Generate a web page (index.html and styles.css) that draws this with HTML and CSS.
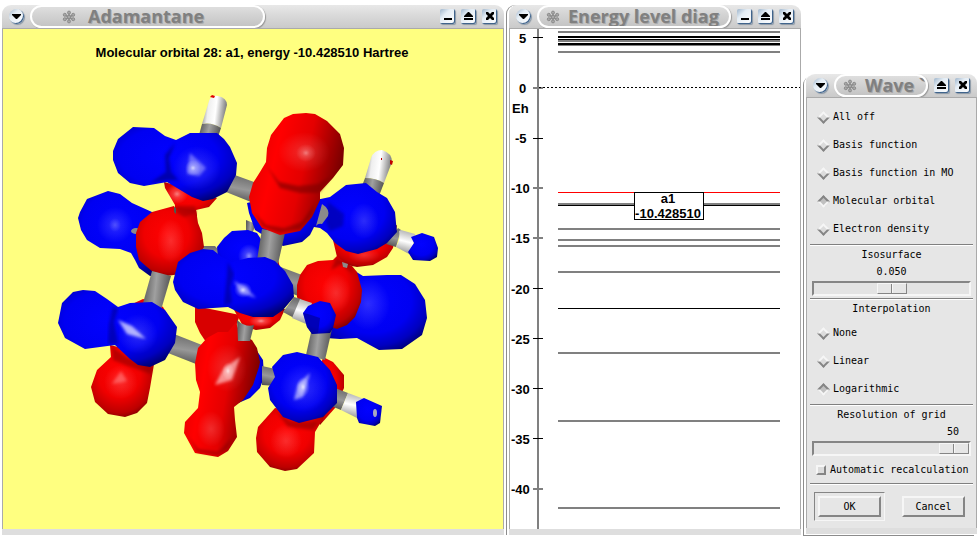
FILE: index.html
```html
<!DOCTYPE html>
<html lang="en">
<head>
<meta charset="utf-8">
<title>Adamantane</title>
<link rel="stylesheet" href="styles.css">
</head>
<body>
<svg class="defs" aria-hidden="true">
  <defs>
    <symbol id="flake" viewBox="0 0 14 14">
      <path stroke="#8c8c8c" stroke-width="1.500" d="M7 2v10M3 5l8 4.500M3 9.500l8-4.500"/>
      <g fill="#a8a8a8" stroke="#8c8c8c" stroke-width="1">
        <circle cx="7" cy="2.600" r="1.500"/><circle cx="7" cy="11.400" r="1.500"/>
        <circle cx="2.800" cy="4.800" r="1.500"/><circle cx="11.200" cy="4.800" r="1.500"/>
        <circle cx="2.800" cy="9.200" r="1.500"/><circle cx="11.200" cy="9.200" r="1.500"/>
        <circle cx="7" cy="7" r="1.800"/>
      </g>
    </symbol>
    <symbol id="down" viewBox="0 0 15 15"><path d="M3 5h9v1l-4 4h-1l-4-4z"/></symbol>
    <symbol id="min" viewBox="0 0 15 15"><path d="M4 9h8v2h-8z"/></symbol>
    <symbol id="eject" viewBox="0 0 15 15"><path d="M7 3h1l4 4v1h-9v-1zM3 9h9v2h-9z"/></symbol>
    <symbol id="close" viewBox="0 0 15 15"><path d="M4 3h2l2 2 2-2h2v2l-2 2 2 2v2h-2l-2-2-2 2h-2v-2l2-2-2-2z"/></symbol>
  </defs>
</svg>
<main class="desktop">
  <section class="window" aria-label="Adamantane">
    <header class="titlebar">
      <button class="tool round" aria-label="Menu"><svg><use href="#down"/></svg></button>
      <h1 class="pill wide"><svg class="flake"><use href="#flake"/></svg><span>Adamantane</span></h1>
      <button class="tool" aria-label="Minimize"><svg><use href="#min"/></svg></button>
      <button class="tool" aria-label="Maximize"><svg><use href="#eject"/></svg></button>
      <button class="tool" aria-label="Close"><svg><use href="#close"/></svg></button>
    </header>
    <div class="view yellow">
      <svg class="canvas" viewBox="3 29 500 500" role="img" aria-label="Molecular orbital 28">
        <defs>
          <radialGradient id="blue" cx=".45" cy=".4" r=".66"><stop offset="0" stop-color="#0202ff"/><stop offset=".6" stop-color="#0000f2"/><stop offset=".84" stop-color="#0000c0"/><stop offset="1" stop-color="#000078"/></radialGradient>
          <radialGradient id="red" cx=".45" cy=".4" r=".66"><stop offset="0" stop-color="#ff0202"/><stop offset=".5" stop-color="#f00000"/><stop offset=".82" stop-color="#bc0000"/><stop offset="1" stop-color="#700000"/></radialGradient>
          <linearGradient id="redv" x2="1" y2=".3"><stop offset="0" stop-color="#d80000"/><stop offset=".35" stop-color="#ff0000"/><stop offset=".65" stop-color="#e40000"/><stop offset="1" stop-color="#7c0000"/></linearGradient>
          <radialGradient id="spec"><stop offset="0" stop-color="#fff" stop-opacity=".7"/><stop offset=".35" stop-color="#fff" stop-opacity=".3"/><stop offset="1" stop-color="#fff" stop-opacity="0"/></radialGradient>
          <radialGradient id="glow"><stop offset="0" stop-color="#fff" stop-opacity=".17"/><stop offset="1" stop-color="#fff" stop-opacity="0"/></radialGradient>
          <radialGradient id="shade"><stop offset="0" stop-color="#000" stop-opacity=".32"/><stop offset="1" stop-color="#000" stop-opacity="0"/></radialGradient>
          <linearGradient id="bv" x2="1" y2=".15"><stop offset="0" stop-color="#505050"/><stop offset=".5" stop-color="#a0a0a0"/><stop offset="1" stop-color="#585858"/></linearGradient>
          <linearGradient id="bh" x1=".2" x2="0" y2="1"><stop offset="0" stop-color="#707070"/><stop offset=".45" stop-color="#989898"/><stop offset="1" stop-color="#484848"/></linearGradient>
          <linearGradient id="wv" x2="1" y2=".15"><stop offset="0" stop-color="#777"/><stop offset=".3" stop-color="#eee"/><stop offset=".6" stop-color="#fff"/><stop offset="1" stop-color="#808080"/></linearGradient>
          <linearGradient id="wh" x1=".2" x2="0" y2="1"><stop offset="0" stop-color="#bbb"/><stop offset=".4" stop-color="#fff"/><stop offset="1" stop-color="#808080"/></linearGradient>
          <filter id="soft"><feGaussianBlur stdDeviation="1.500"/></filter>
        </defs>
        <text class="caption" x="252" y="57" text-anchor="middle">Molecular orbital 28: a1, energy -10.428510 Hartree</text>

        <!-- hydrogen sticks behind the surface -->
        <path fill="url(#wv)" d="M202 124L209 101Q211 95 218 96Q227 98 227 105L221 128Q212 122 202 124z"/>
        <path fill="url(#bv)" d="M202 124Q212 122 221 128L218 137L199 135z"/>
        <path fill="#e00000" d="M210 97l2-2 3 1-1 2z"/>
        <path fill="url(#wv)" d="M365 178L371 158Q374 150 382 150Q392 153 392 162L384 183Q376 178 365 178z"/>
        <path fill="url(#bv)" d="M365 178Q376 178 384 183L379 196L362 186z"/>
        <path fill="#c00000" d="M390 160l3 1-1 4-2-1zM381 158h1v2h-1z"/>

        <!-- rear lobes -->
        <path fill="url(#blue)" d="M350 268L363 276L387 275L401 275L415 284L425 300L427 318L422 335L402 349L379 350L368 344L357 338L340 339L326 338L332 300z"/>
        <ellipse fill="url(#glow)" cx="368" cy="304" rx="22" ry="26"/>
        <path fill="url(#red)" d="M323 357L333 362L344 375L344 388L335 408L320 425L310 405z"/>
        <path fill="#ee0000" d="M128 306L143 299L155 302L163 307L167 314L150 322z"/>
        <path fill="url(#blue)" d="M87 199L108 191L120 194L132 203L152 212L165 240L168 276L150 276L139 268L135 260L131 253L120 249L100 248L87 240L81 230L78 218L80 212z"/>
        <ellipse fill="url(#glow)" cx="115" cy="225" rx="18" ry="18"/>
        <ellipse fill="url(#glow)" cx="115" cy="225" rx="6" ry="7"/>
        <ellipse fill="#8a8a8a" cx="136" cy="231" rx="5" ry="3"/>
        <path fill="url(#bh)" d="M201 246L215 246L222 254L218 262L200 256z"/>
        <path fill="#d80000" d="M195 306L195 322L200 333L206 342L233 334L240 315z"/>
        <path fill="url(#blue)" d="M255 348L263 360L264 377L260 388L250 398L236 404z"/>
        <path fill="url(#bh)" d="M262 366L280 370L277 386L262 385z"/>
        <path fill="url(#bv)" d="M246 220L256 224L252 234L246 234z"/>
        <path fill="#c80000" d="M262 255L278 260L282 275L265 275z"/>
        <path fill="url(#blue)" d="M247 203L249 213L255 230L268 238L283 246L302 242L310 235L314 227L322 226L322 200L300 190z"/>
        <path fill="url(#blue)" d="M217 247L224 238L232 231L248 230L257 233L264 244L272 275L220 275z"/>
        <ellipse fill="url(#spec)" opacity=".8" cx="249" cy="256" rx="11" ry="12"/>

        <!-- upper left -->
        <path fill="url(#red)" d="M164 182L165 188L175 205L174 216L197 216L196 210L209 207L217 198L203 192z"/>
        <ellipse fill="url(#spec)" opacity=".7" cx="177" cy="194" rx="11" ry="10"/>
        <path fill="url(#red)" d="M152 212L174 206L175 209L196 210L198 223L202 233L204 247L198 257L180 274L167 276L153 272L147 267L139 260L136 247L136 233L140 222z"/>
        <path fill="#a00000" opacity=".6" filter="url(#soft)" d="M177 206L195 206L196 213L184 217L176 212z"/>
        <ellipse fill="url(#glow)" cx="171" cy="241" rx="14" ry="22"/>
        <path fill="#4d5a4d" d="M174 207l2 1v6l-2-2z"/>
        <path fill="url(#bh)" d="M232 174L254 182L251 202L226 192z"/>
        <path fill="url(#blue)" d="M133 127L154 128L165 136L176 140L190 133L217 133L224 139L230 147L237 163L236 175L227 192L213 199L203 201L192 197L177 188L167 182L144 186L130 183L118 173L113 160L113 151L118 139z"/>
        <path fill="#000080" opacity=".6" filter="url(#soft)" d="M175 143L169 158L171 172L178 180L168 180L150 183L166 172L165 155z"/>
        <ellipse fill="url(#glow)" cx="197" cy="168" rx="24" ry="22"/>
        <path fill="#b8b8ff" opacity=".5" filter="url(#soft)" d="M190 153L206 168L199 176L187 174z"/>
        <ellipse fill="url(#spec)" cx="193" cy="168" rx="8" ry="8"/>

        <!-- upper right -->
        <path fill="url(#red)" d="M333 240L337 257L342 264L357 267L373 265L387 257L393 248L397 225L370 240z"/>
        <ellipse fill="url(#glow)" cx="364" cy="255" rx="16" ry="8"/>
        <path fill="url(#bh)" d="M398 228L401 230L396 247L386 244z"/>
        <path fill="url(#wh)" d="M401 230L415 234L413 245L409 254L396 247Q401 239 399 231z"/>
        <path fill="url(#blue)" d="M411 237L422 233L434 237L438 248L437 257L430 261L413 260L408 252L414 243z"/>
        <path fill="url(#blue)" d="M316 200L330 197L346 185L366 183L377 192L387 198L395 212L396 223L397 232L387 243L377 249L358 254L346 251L335 243L327 233L320 228L314 227z"/>
        <path fill="#000080" opacity=".45" filter="url(#soft)" d="M328 202L344 214L343 226L330 231L326 222z"/>
        <ellipse fill="url(#glow)" cx="364" cy="221" rx="15" ry="18"/>
        <path fill="#8a8a8a" d="M322 204Q330 209 328 216L322 224Q318 223 316 226z"/>
        <path fill="url(#bh)" d="M278 266L302 275L298 296L284 290z"/>
        <path fill="url(#red)" d="M307 265L318 261L333 260L337 256L347 264L352 266L357 272L362 290L361 302L355 317L347 325L337 329L319 323L303 310L297 297L297 285L300 275z"/>
        <path fill="#900000" opacity=".6" filter="url(#soft)" d="M336 258L331 270L342 264L353 274L350 264z"/>
        <ellipse fill="url(#glow)" cx="336" cy="293" rx="15" ry="20"/>
        <path fill="#8a8a8a" d="M342 262L348 264L347 268L343 267z"/>

        <path fill="url(#bv)" d="M262 229L285 233L278 264L257 260z"/>
        <path fill="url(#redv)" d="M284 118L293 114L306 113L315 114L327 121L340 134L344 148L343 165L333 178L320 192L320 200L312 217L300 231L280 235L262 228L252 213L249 197L253 183L260 172L266 162L267 148L271 135z"/>
        <path fill="#800000" opacity=".65" filter="url(#soft)" d="M267 166L279 182L298 186L318 184L332 176L319 193L300 193L280 188z"/>
        <ellipse fill="url(#glow)" cx="304" cy="152" rx="26" ry="20"/>
        <ellipse fill="url(#spec)" opacity=".55" cx="306" cy="153" rx="10" ry="9"/>
        <path fill="#700000" opacity=".5" filter="url(#soft)" d="M254 212L266 225L284 228L302 222L315 203L311 216L300 229L280 233L263 227z"/>

        <!-- centre -->
        <path fill="url(#red)" d="M233 308L243 326L256 330L270 328L280 320L285 309z"/>
        <ellipse fill="url(#spec)" opacity=".8" cx="261" cy="321" rx="12" ry="6"/>
        <path fill="url(#bh)" d="M294 297L301 299L294 318L283 312z"/>
        <path fill="url(#wh)" d="M300 299L312 303L306 324L292 318z"/>
        <path fill="url(#blue)" d="M176 270L178 262L190 253L203 249L213 250L222 257L232 262L248 258L265 257L275 261L285 271L293 285L294 297L283 310L273 317L253 317L240 313L228 307L198 309L183 302L175 290L173 282z"/>
        <path fill="#000080" opacity=".5" filter="url(#soft)" d="M228 262L234 274L230 288L232 303L224 305L226 286z"/>
        <path fill="#9c9cff" opacity=".7" filter="url(#soft)" d="M234 281L246 287L256 298L240 293z"/>
        <ellipse fill="url(#spec)" cx="243" cy="290" rx="9" ry="8"/>

        <!-- lower left -->
        <path fill="url(#bv)" d="M152 271L171 276L161 310L143 303z"/>
        <path fill="url(#red)" d="M110 345L111 357L97 370L91 387L95 402L108 414L125 417L137 413L147 403L150 388L154 364L130 350z"/>
        <path fill="#800000" opacity=".5" filter="url(#soft)" d="M112 347L128 358L152 366L151 374L128 366L113 360z"/>
        <ellipse fill="url(#glow)" cx="121" cy="382" rx="17" ry="17"/>
        <path fill="#ff9090" opacity=".5" filter="url(#soft)" d="M121 371L127 381L112 384z"/>
        <path fill="url(#bh)" d="M174 334L202 345L196 364L168 353z"/>
        <path fill="url(#blue)" d="M73 292L83 290L95 291L107 299L118 307L130 303L152 302L165 310L177 327L175 343L165 360L150 367L138 365L130 359L115 345L85 349L65 338L58 323L62 303z"/>
        <path fill="#000080" opacity=".5" filter="url(#soft)" d="M113 306L118 309L114 322L118 344L108 344L109 324z"/>
        <ellipse fill="url(#glow)" cx="138" cy="334" rx="20" ry="20"/>
        <path fill="#d8d8ff" opacity=".8" filter="url(#soft)" d="M118 320L132 326L146 339L127 334z"/>

        <!-- lower centre -->
        <path fill="url(#redv)" d="M236 322L228 332L218 332L207 338L198 348L195 363L196 380L200 392L198 408L185 422L184 433L195 453L218 457L228 451L237 437L235 420L234 407L243 400L253 385L259 367L260 362L257 348L252 340L240 334z"/>
        <ellipse fill="url(#glow)" cx="227" cy="368" rx="20" ry="24"/>
        <path fill="#ffc4c4" opacity=".7" filter="url(#soft)" d="M240 357L232 380L215 385L224 368z"/>
        <ellipse fill="url(#spec)" cx="228" cy="371" rx="6" ry="9"/>
        <ellipse fill="url(#glow)" cx="211" cy="429" rx="14" ry="18"/>
        <path fill="#800000" opacity=".5" filter="url(#soft)" d="M188 436L198 449L218 452L233 437L227 449L217 455L197 452z"/>
        <path fill="url(#bv)" d="M237 320Q246 328 254 325L250 341L238 341Z"/>

        <!-- lower right -->
        <path fill="url(#bv)" d="M312 328L332 329L325 360L306 355z"/>
        <path fill="url(#red)" d="M275 408L258 427L256 438L257 452L270 467L285 471L297 469L314 453L315 432L325 415z"/>
        <path fill="#800000" opacity=".5" filter="url(#soft)" d="M276 411L290 421L318 422L313 430L288 427z"/>
        <ellipse fill="url(#glow)" cx="286" cy="441" rx="16" ry="17"/>
        <path fill="url(#bh)" d="M335 388L348 393L341 410L331 406z"/>
        <path fill="url(#wh)" d="M348 393L364 399L357 418L341 410z"/>
        <path fill="url(#blue)" d="M356 402L364 398L382 406L380 423L375 426L359 423L357 418z"/>
        <ellipse fill="#a8a8c0" cx="375" cy="413" rx="2" ry="4"/>
        <path fill="url(#blue)" d="M283 355L297 352L318 357L330 370L337 385L337 403L323 417L299 423L283 417L270 400L268 388L275 377L272 367z"/>
        <ellipse fill="url(#glow)" cx="304" cy="388" rx="24" ry="24"/>
        <path fill="#d8d8ff" opacity=".65" filter="url(#soft)" d="M310 373L303 397L294 400L298 384z"/>
        <ellipse fill="url(#spec)" cx="303" cy="387" rx="7" ry="10"/>
        <path fill="url(#blue)" d="M303 313L308 306L320 301L330 303L336 315L333 328L330 333L312 334L307 327z"/>
        <path fill="#000090" opacity=".6" d="M308 314L320 318L318 333L312 334L307 327L303 313z"/>
      </svg>
    </div>
    <div class="grip"></div>
  </section>

  <section class="window ruled" aria-label="Energy level diagram">
    <header class="titlebar">
      <button class="tool round" aria-label="Menu"><svg><use href="#down"/></svg></button>
      <h1 class="pill"><svg class="flake"><use href="#flake"/></svg><span>Energy level diag</span></h1>
      <button class="tool" aria-label="Minimize"><svg><use href="#min"/></svg></button>
      <button class="tool" aria-label="Maximize"><svg><use href="#eject"/></svg></button>
      <button class="tool" aria-label="Close"><svg><use href="#close"/></svg></button>
    </header>
    <div class="view white">
      <svg class="canvas" viewBox="510 29 290 500" role="img" aria-label="Energy levels in Hartree">
        <g fill="#808080">
          <path d="M537 29h2v500h-2z"/>
          <path d="M533 87h10v2h-10zM533 187h10v2h-10zM533 237h10v2h-10zM533 488h10v2h-10z"/>
          <path d="M558 31h222v2h-222zM558 40h222v2h-222zM558 45h222v1h-222zM558 51h222v2h-222z"/>
          <path d="M558 203h222v2h-222zM558 228h222v2h-222zM558 239h222v2h-222zM558 245h222v2h-222zM558 271h222v2h-222z"/>
          <path d="M558 352h222v2h-222zM558 420h222v2h-222zM558 507h222v2h-222z"/>
        </g>
        <path d="M533 37h10v1h-10zM533 138h10v1h-10zM533 288h10v1h-10zM533 338h10v1h-10zM533 388h10v1h-10zM533 438h10v1h-10z"/>
        <path d="M558 36h222v2h-222zM558 39h222v1h-222zM558 43h222v2h-222zM558 205h222v1h-222zM558 308h222v1h-222z"/>
        <path fill="#f00" d="M558 192h222v1h-222z"/>
        <path fill="none" stroke="#000" stroke-dasharray="2 2" d="M539 87.500h261"/>
        <g class="caption">
          <text x="519" y="43">5</text><text x="519" y="93">0</text><text x="512" y="113">Eh</text>
          <text x="515" y="143">-5</text><text x="511" y="193">-10</text><text x="511" y="243">-15</text>
          <text x="511" y="294">-20</text><text x="511" y="344">-25</text><text x="511" y="394">-30</text>
          <text x="511" y="444">-35</text><text x="511" y="494">-40</text>
        </g>
        <path d="M634 192h70v28h-70z"/><path fill="#fff" d="M635 193h68v26h-68z"/>
        <g class="caption" text-anchor="middle"><text x="668" y="203">a1</text><text x="668" y="218">-10.428510</text></g>
      </svg>
    </div>
    <div class="grip"></div>
  </section>

  <section class="window ruled dialog" aria-label="Wave function">
    <header class="titlebar">
      <button class="tool round" aria-label="Menu"><svg><use href="#down"/></svg></button>
      <h1 class="pill"><svg class="flake"><use href="#flake"/></svg><span>Wave `</span></h1>
      <button class="tool" aria-label="Maximize"><svg><use href="#eject"/></svg></button>
      <button class="tool" aria-label="Close"><svg><use href="#close"/></svg></button>
    </header>
    <form class="panel">
      <div class="options first">
        <label><input type="radio" name="kind">All off</label>
        <label><input type="radio" name="kind">Basis function</label>
        <label><input type="radio" name="kind">Basis function in MO</label>
        <label><input type="radio" name="kind" checked>Molecular orbital</label>
        <label><input type="radio" name="kind">Electron density</label>
      </div>
      <div class="scale">
        <label for="iso">Isosurface</label>
        <output for="iso">0.050</output>
        <input type="range" id="iso" min="0" max="0.1" step="0.001" value="0.05">
      </div>
      <div class="options">
        <p>Interpolation</p>
        <label><input type="radio" name="interp">None</label>
        <label><input type="radio" name="interp">Linear</label>
        <label><input type="radio" name="interp" checked>Logarithmic</label>
      </div>
      <div class="scale end">
        <label for="res">Resolution of grid</label>
        <output for="res">50</output>
        <input type="range" id="res" min="1" max="50" value="50">
        <div class="check"><input type="checkbox" id="auto"><label for="auto">Automatic recalculation</label></div>
      </div>
      <div class="actions">
        <span class="default"><button type="button">OK</button></span>
        <button type="button">Cancel</button>
      </div>
    </form>
    <div class="grip"></div>
  </section>
</main>
</body>
</html>
```
FILE: styles.css
```css
* { box-sizing: border-box; }

body {
  margin: 0;
  background: #fff;
  color: #000;
}

.defs {
  position: absolute;
  width: 0;
  height: 0;
}

.desktop {
  display: grid;
  grid-template-columns: 502fr 292fr 171fr;
  gap: 5px;
  min-height: 100vh;
  padding: 5px 2px 1px;
}

.window {
  display: flex;
  flex-direction: column;
  min-width: 0;
}

.ruled {
  border-radius: 9px 9px 0 0;
  box-shadow: -2px 0 #fff, -3px 0 #8c8c8c;
}

.dialog {
  align-self: end;
  margin-bottom: 1px;
  box-shadow: -2px 1px #fff, -3px 2px #8c8c8c;
}

.titlebar {
  display: flex;
  align-items: center;
  gap: 6px;
  height: 23px;
  padding: 0 7px;
  border-radius: 9px 9px 0 0;
  background: linear-gradient(#e8e8e8, #d8d8d8 50%, #cacaca);
}

.tool {
  flex: none;
  width: 15px;
  height: 15px;
  padding: 0;
  border: 0;
  border-radius: 2px;
  background: linear-gradient(135deg, #9db4cb, #e4edf5 35%, #fff);
  box-shadow: inset -1px -1px #40648c, 1px 1px 1px #8a97a5;
}

.tool svg {
  display: block;
  width: 15px;
  height: 15px;
}

.round {
  border-radius: 50%;
}

.pill {
  display: flex;
  flex: 1;
  align-items: center;
  gap: 8px;
  min-width: 0;
  height: 23px;
  margin: 0;
  padding: 0 4px 0 7px;
  border: 2px solid #fff;
  border-radius: 12px;
  background: linear-gradient(#dedede, #c4c4c4);
  box-shadow: 1px 1px 1px #999;
  color: #808080;
  font: bold 18px/19px "Open Sans", "Noto Sans", sans-serif;
  text-shadow: 1px 1px #aaa;
  white-space: nowrap;
  overflow: hidden;
}

.pill.wide {
  flex: 0 1 235px;
  gap: 12px;
  margin-right: auto;
  padding-left: 30px;
}

.flake {
  flex: none;
  width: 14px;
  height: 14px;
}

.view {
  flex: 1;
  border: 1px solid #aaa;
  border-bottom: 0;
}

.yellow { background: #ffff80; }
.white { background: #fff; }

.canvas {
  display: block;
  width: 100%;
}

.caption {
  font: bold 13px "Liberation Sans", Arial, sans-serif;
}

.grip {
  height: 6px;
  background: #dedede;
}

.panel {
  border: 1px solid #aaa;
  border-bottom: 0;
  background: #e6e6e6;
  font: 10px/16px "DejaVu Sans Mono", monospace;
}

.panel p { margin: 0; }

.options,
.scale {
  margin: 0 3px;
  padding: 1px 0;
  border-bottom: 1px solid #808080;
  box-shadow: 0 1px #fff;
}

.options.first { padding-top: 5px; }

.options:not(.first),
.scale { margin-top: 1px; }

.options p {
  margin-bottom: 2px;
  text-align: center;
}

.options label {
  display: flex;
  align-items: center;
  gap: 5px;
  height: 28px;
  padding-left: 9px;
}

input[type="radio"] {
  appearance: none;
  width: 9px;
  height: 9px;
  margin: 0;
  border: 2px solid;
  border-color: #f6f6f6 #858585 #858585 #f6f6f6;
  background: #dcdcdc;
  transform: rotate(45deg);
}

input[type="radio"]:checked {
  border-color: #858585 #f6f6f6 #f6f6f6 #858585;
  background: #c0c0c0;
}

.scale {
  display: grid;
  row-gap: 1px;
  padding: 1px 2px 2px;
  text-align: center;
}

.scale.end output {
  padding-right: 12px;
  text-align: right;
}

input[type="range"] {
  appearance: none;
  width: 100%;
  height: 15px;
  margin: 0;
  border: 2px solid;
  border-color: #858585 #f6f6f6 #f6f6f6 #858585;
  background: #e3e3e3;
}

input[type="range"]::-webkit-slider-thumb {
  appearance: none;
  width: 30px;
  height: 11px;
  border: 1px solid;
  border-color: #f6f6f6 #858585 #858585 #f6f6f6;
  background: linear-gradient(90deg, #e6e6e6 13px, #858585 13px 14px, #f6f6f6 14px 15px, #e6e6e6 15px);
}

.check {
  display: flex;
  align-items: center;
  gap: 4px;
  height: 22px;
  margin-top: 2px;
  padding-left: 4px;
}

.check input {
  appearance: none;
  width: 10px;
  height: 10px;
  margin: 0;
  border: 2px solid;
  border-color: #f6f6f6 #858585 #858585 #f6f6f6;
  background: #dcdcdc;
}

.actions {
  display: flex;
  align-items: center;
  justify-content: space-between;
  margin-top: 1px;
  padding: 7px 11px 7px 7px;
}

.default {
  padding: 3px;
  border: 1px solid;
  border-color: #858585 #f6f6f6 #f6f6f6 #858585;
}

.actions button {
  display: block;
  width: 63px;
  height: 21px;
  padding: 0;
  border: 2px solid;
  border-color: #f6f6f6 #858585 #858585 #f6f6f6;
  background: #e6e6e6;
  color: inherit;
  font: inherit;
}
```
